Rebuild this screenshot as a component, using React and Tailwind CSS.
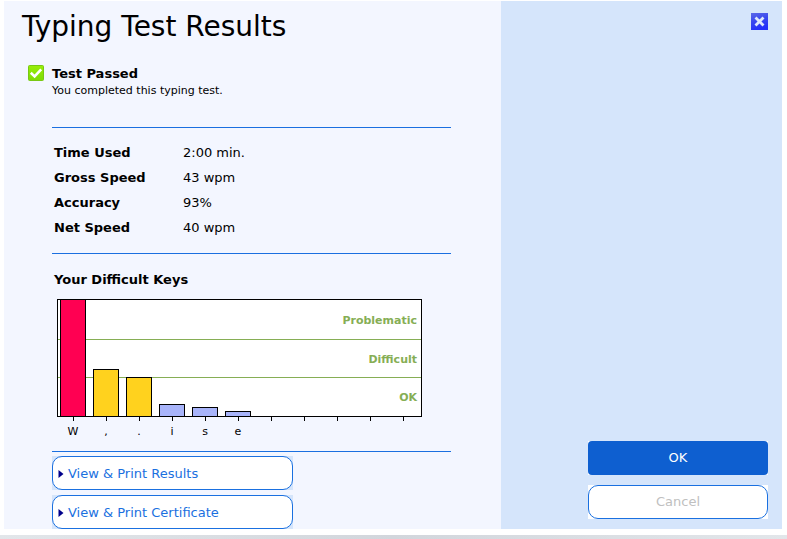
import React from 'react';

const stats = [
  ['Time Used', '2:00 min.'],
  ['Gross Speed', '43 wpm'],
  ['Accuracy', '93%'],
  ['Net Speed', '40 wpm'],
];

const PLOT_BOTTOM = 121;
const SLOT = 33;
const keys = [
  { label: 'W', height: 117, fill: '#ff0052' },
  { label: ',', height: 47, fill: '#ffd21e' },
  { label: '.', height: 39, fill: '#ffd21e' },
  { label: 'i', height: 12, fill: '#a8b4fa' },
  { label: 's', height: 9, fill: '#a8b4fa' },
  { label: 'e', height: 5, fill: '#a8b4fa' },
];
const zones = [
  { label: 'Problematic', y: 29 },
  { label: 'Difficult', y: 68 },
  { label: 'OK', y: 106 },
];

function PassedIcon() {
  return (
    <svg width="16" height="16" viewBox="0 0 16 16" aria-hidden="true">
      <defs>
        <linearGradient id="passed" x1="0" y1="0" x2="0" y2="1">
          <stop offset="0" stopColor="#98ee08" />
          <stop offset="1" stopColor="#7edb05" />
        </linearGradient>
      </defs>
      <rect x="0.5" y="0.5" width="15" height="15" rx="1" fill="url(#passed)" stroke="#78c814" />
      <path d="M2.8 7.8L6.6 11.4L13.2 4.4" fill="none" stroke="#fff" strokeWidth="2.6" />
    </svg>
  );
}

function CloseIcon() {
  return (
    <svg width="17" height="17" viewBox="0 0 17 17" aria-hidden="true">
      <defs>
        <linearGradient id="close" x1="0" y1="0" x2="0.3" y2="1">
          <stop offset="0" stopColor="#5b68e8" />
          <stop offset="0.5" stopColor="#3a48ee" />
          <stop offset="1" stopColor="#2430fa" />
        </linearGradient>
      </defs>
      <rect width="17" height="17" fill="url(#close)" />
      <path d="M5.5 5.5L11.5 11.5M11.5 5.5L5.5 11.5" fill="none" stroke="#dfe8fb" strokeWidth="2.8" strokeLinecap="square" />
    </svg>
  );
}

function KeysChart() {
  return (
    <svg width="380" height="145" viewBox="0 0 380 145" className="block" role="img" aria-label="Your difficult keys">
      <rect x="5.5" y="4.5" width="364" height="117" fill="#fff" />
      <path d="M6 44.5H369M6 82.5H369" stroke="#86ae55" />
      {keys.map((key, i) => (
        <g key={key.label}>
          <rect x={8.5 + i * SLOT} y={PLOT_BOTTOM + 0.5 - key.height} width="25" height={key.height} fill={key.fill} stroke="#000" />
          <text x={21 + i * SLOT} y="140" textAnchor="middle" fontSize="11">{key.label}</text>
        </g>
      ))}
      <rect x="5.5" y="4.5" width="364" height="117" fill="none" stroke="#000" />
      {Array.from({ length: 11 }, (_, i) => (
        <path key={i} d={`M${21.5 + i * SLOT} 122V126`} stroke="#000" />
      ))}
      {zones.map((zone) => (
        <text key={zone.label} x="365" y={zone.y} textAnchor="end" fontSize="11" fontWeight="bold" fill="#86ae55">{zone.label}</text>
      ))}
    </svg>
  );
}

function PrintButton({ children }) {
  return (
    <div className="w-[241px] bg-[#d5e5fb]">
      <button type="button" className="flex h-[34px] w-full items-center gap-1 rounded-[10px] border border-[#1a70e0] bg-white pt-px pl-[5px] text-[13px] text-[#1a70e0]">
        <svg width="6" height="8" viewBox="0 0 6 8" aria-hidden="true"><path d="M0.5 0L5.5 4L0.5 8Z" fill="#00008b" /></svg>
        {children}
      </button>
    </div>
  );
}

export default function App() {
  return (
    <div className="flex min-h-screen flex-col justify-between bg-white font-['Verdana','DejaVu_Sans',sans-serif] text-black">
      <main className="mt-px mr-[5px] ml-1 flex">
        <section className="grow bg-[#f3f6ff] pt-2">
          <h1 className="pl-[18px] text-[28px] leading-9">Typing Test Results</h1>
          <div className="mt-5 flex gap-2 pl-6">
            <PassedIcon />
            <div>
              <h2 className="text-[13px] leading-[18px] font-bold">Test Passed</h2>
              <p className="text-[11px] leading-4">You completed this typing test.</p>
            </div>
          </div>
          <div className="mr-[50px] ml-12">
            <div className="mt-7 border-y border-[#1a6fe0] pt-3 pb-[13px]">
              <table className="text-[13px]">
                <tbody>
                  {stats.map(([name, value]) => (
                    <tr key={name} className="h-[25px]">
                      <th scope="row" className="w-[131px] pl-0.5 text-left font-bold">{name}</th>
                      <td>{value}</td>
                    </tr>
                  ))}
                </tbody>
              </table>
            </div>
            <div className="border-b border-[#1a6fe0] pt-[17px] pb-[11px]">
              <h2 className="mb-1.5 pl-0.5 text-[13px] leading-[18px] font-bold">Your Difficult Keys</h2>
              <KeysChart />
            </div>
            <div className="mt-1 flex flex-col gap-[5px]">
              <PrintButton>View &amp; Print Results</PrintButton>
              <PrintButton>View &amp; Print Certificate</PrintButton>
            </div>
          </div>
        </section>
        <aside className="flex w-[281px] shrink-0 flex-col justify-between bg-[#d5e5fb] pt-3 pr-3.5 pb-2.5">
          <button type="button" aria-label="Close" className="self-end"><CloseIcon /></button>
          <div className="flex w-[180px] flex-col gap-2.5 self-end text-[13px]">
            <div className="bg-white">
              <button type="button" className="block h-[34px] w-full rounded bg-[#0e5fd0] text-white">OK</button>
            </div>
            <div className="bg-white">
              <button type="button" disabled className="block h-[34px] w-full rounded-[10px] border border-[#1a70e0] bg-white text-[#c0c0c0]">Cancel</button>
            </div>
          </div>
        </aside>
      </main>
      <div className="h-1 bg-linear-to-r from-[#e2e6ea] via-[#d2d6dc] to-[#e2e6ea]" />
    </div>
  );
}
